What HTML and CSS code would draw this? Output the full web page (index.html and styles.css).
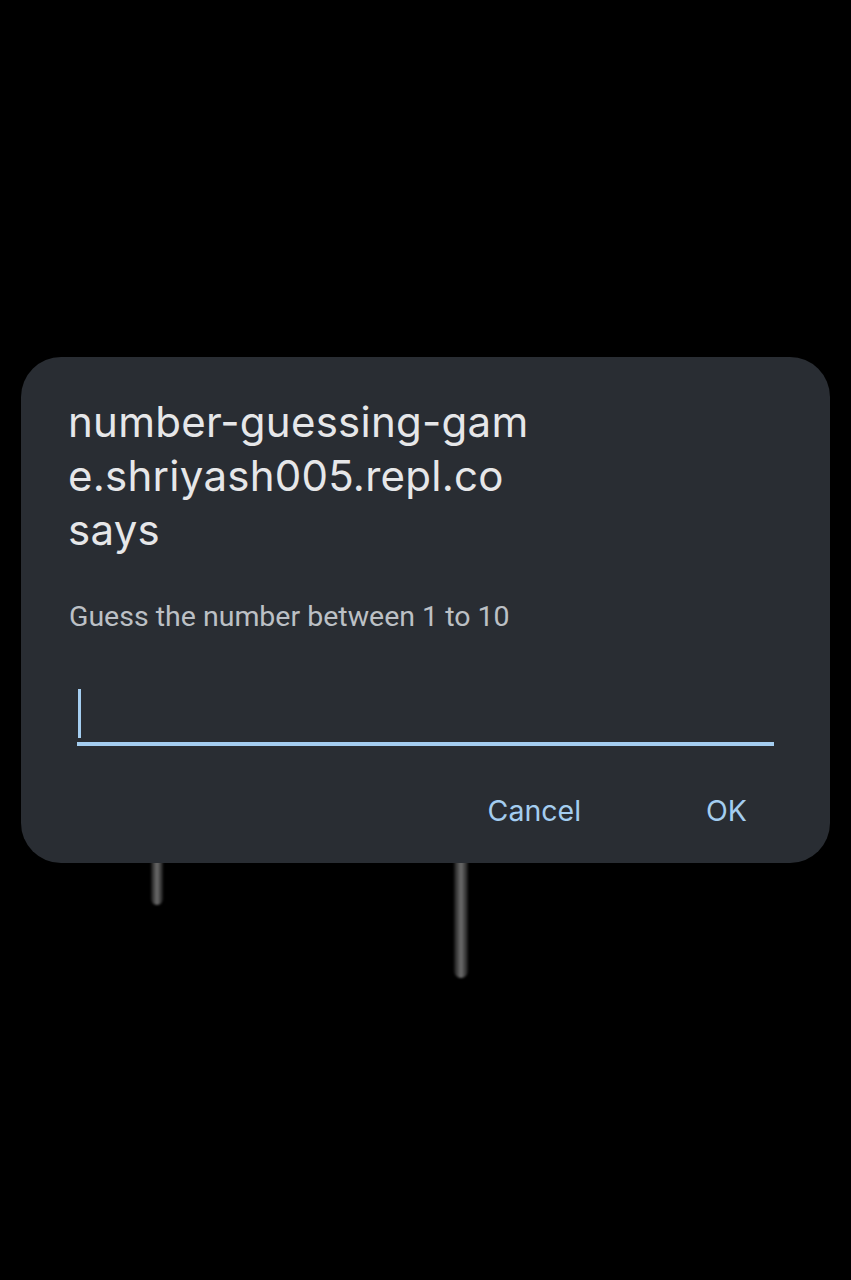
FILE: index.html
```html
<!DOCTYPE html>
<html lang="en">
<head>
<meta charset="utf-8">
<title>Prompt</title>
<link rel="stylesheet" href="styles.css">
</head>
<body>
<div class="backdrop">
  <span class="stem stem-a"></span>
  <span class="stem stem-b"></span>
</div>
<div class="dialog" role="dialog">
  <div class="title">
    <span class="line">number-guessing-gam</span>
    <span class="line">e.shriyash005.repl.co</span>
    <span class="line">says</span>
  </div>
  <p class="message">Guess the number between 1 to 10</p>
  <div class="field"><span class="caret"></span></div>
  <div class="actions">
    <button class="btn">Cancel</button>
    <button class="btn">OK</button>
  </div>
</div>
</body>
</html>
```
FILE: styles.css
```css
html, body {
  margin: 0;
  padding: 0;
  background: #000;
}
body {
  width: 851px;
  height: 1280px;
  position: relative;
  overflow: hidden;
  padding-top: 357px;
  box-sizing: border-box;
}
.backdrop {
  position: absolute;
  inset: 0;
  z-index: 0;
}
.stem {
  position: absolute;
  top: 850px;
  border-radius: 7px;
  background: linear-gradient(to right, #1a1a1a, #6e6e6e 50%, #1a1a1a);
  filter: blur(1px);
}
.stem-a {
  left: 151px;
  width: 12px;
  height: 55px;
}
.stem-b {
  left: 454px;
  width: 14px;
  height: 128px;
}
.dialog {
  position: relative;
  z-index: 1;
  margin-left: 21px;
  width: 809px;
  box-sizing: border-box;
  background: #292d33;
  border-radius: 40px;
  padding: 38px 0 34px 0;
}
.title {
  padding-left: 47px;
  font-family: Inter, "Roboto", sans-serif;
  font-size: 42px;
  line-height: 54px;
  color: #e6e7e9;
  letter-spacing: 0.25px;
}
.title .line {
  display: block;
  white-space: nowrap;
}
.message {
  margin: 43px 0 0 0;
  padding-left: 48px;
  font-family: Roboto, sans-serif;
  font-size: 28.5px;
  line-height: 34px;
  color: #bcc0c5;
}
.field {
  margin: 55px 56px 0 56px;
  height: 53px;
  border-bottom: 4px solid #a4cdf0;
  display: flex;
  align-items: flex-start;
}
.caret {
  display: block;
  width: 3px;
  height: 49px;
  margin-left: 1px;
  background: #a4cdf0;
}
.actions {
  margin-top: 47px;
  display: flex;
  justify-content: flex-end;
  gap: 125px;
  padding-right: 83px;
}
.btn {
  background: none;
  border: 0;
  padding: 0;
  font-family: Inter, "Roboto", sans-serif;
  font-size: 28.5px;
  line-height: 36px;
  color: #a4cdf0;
}
```
